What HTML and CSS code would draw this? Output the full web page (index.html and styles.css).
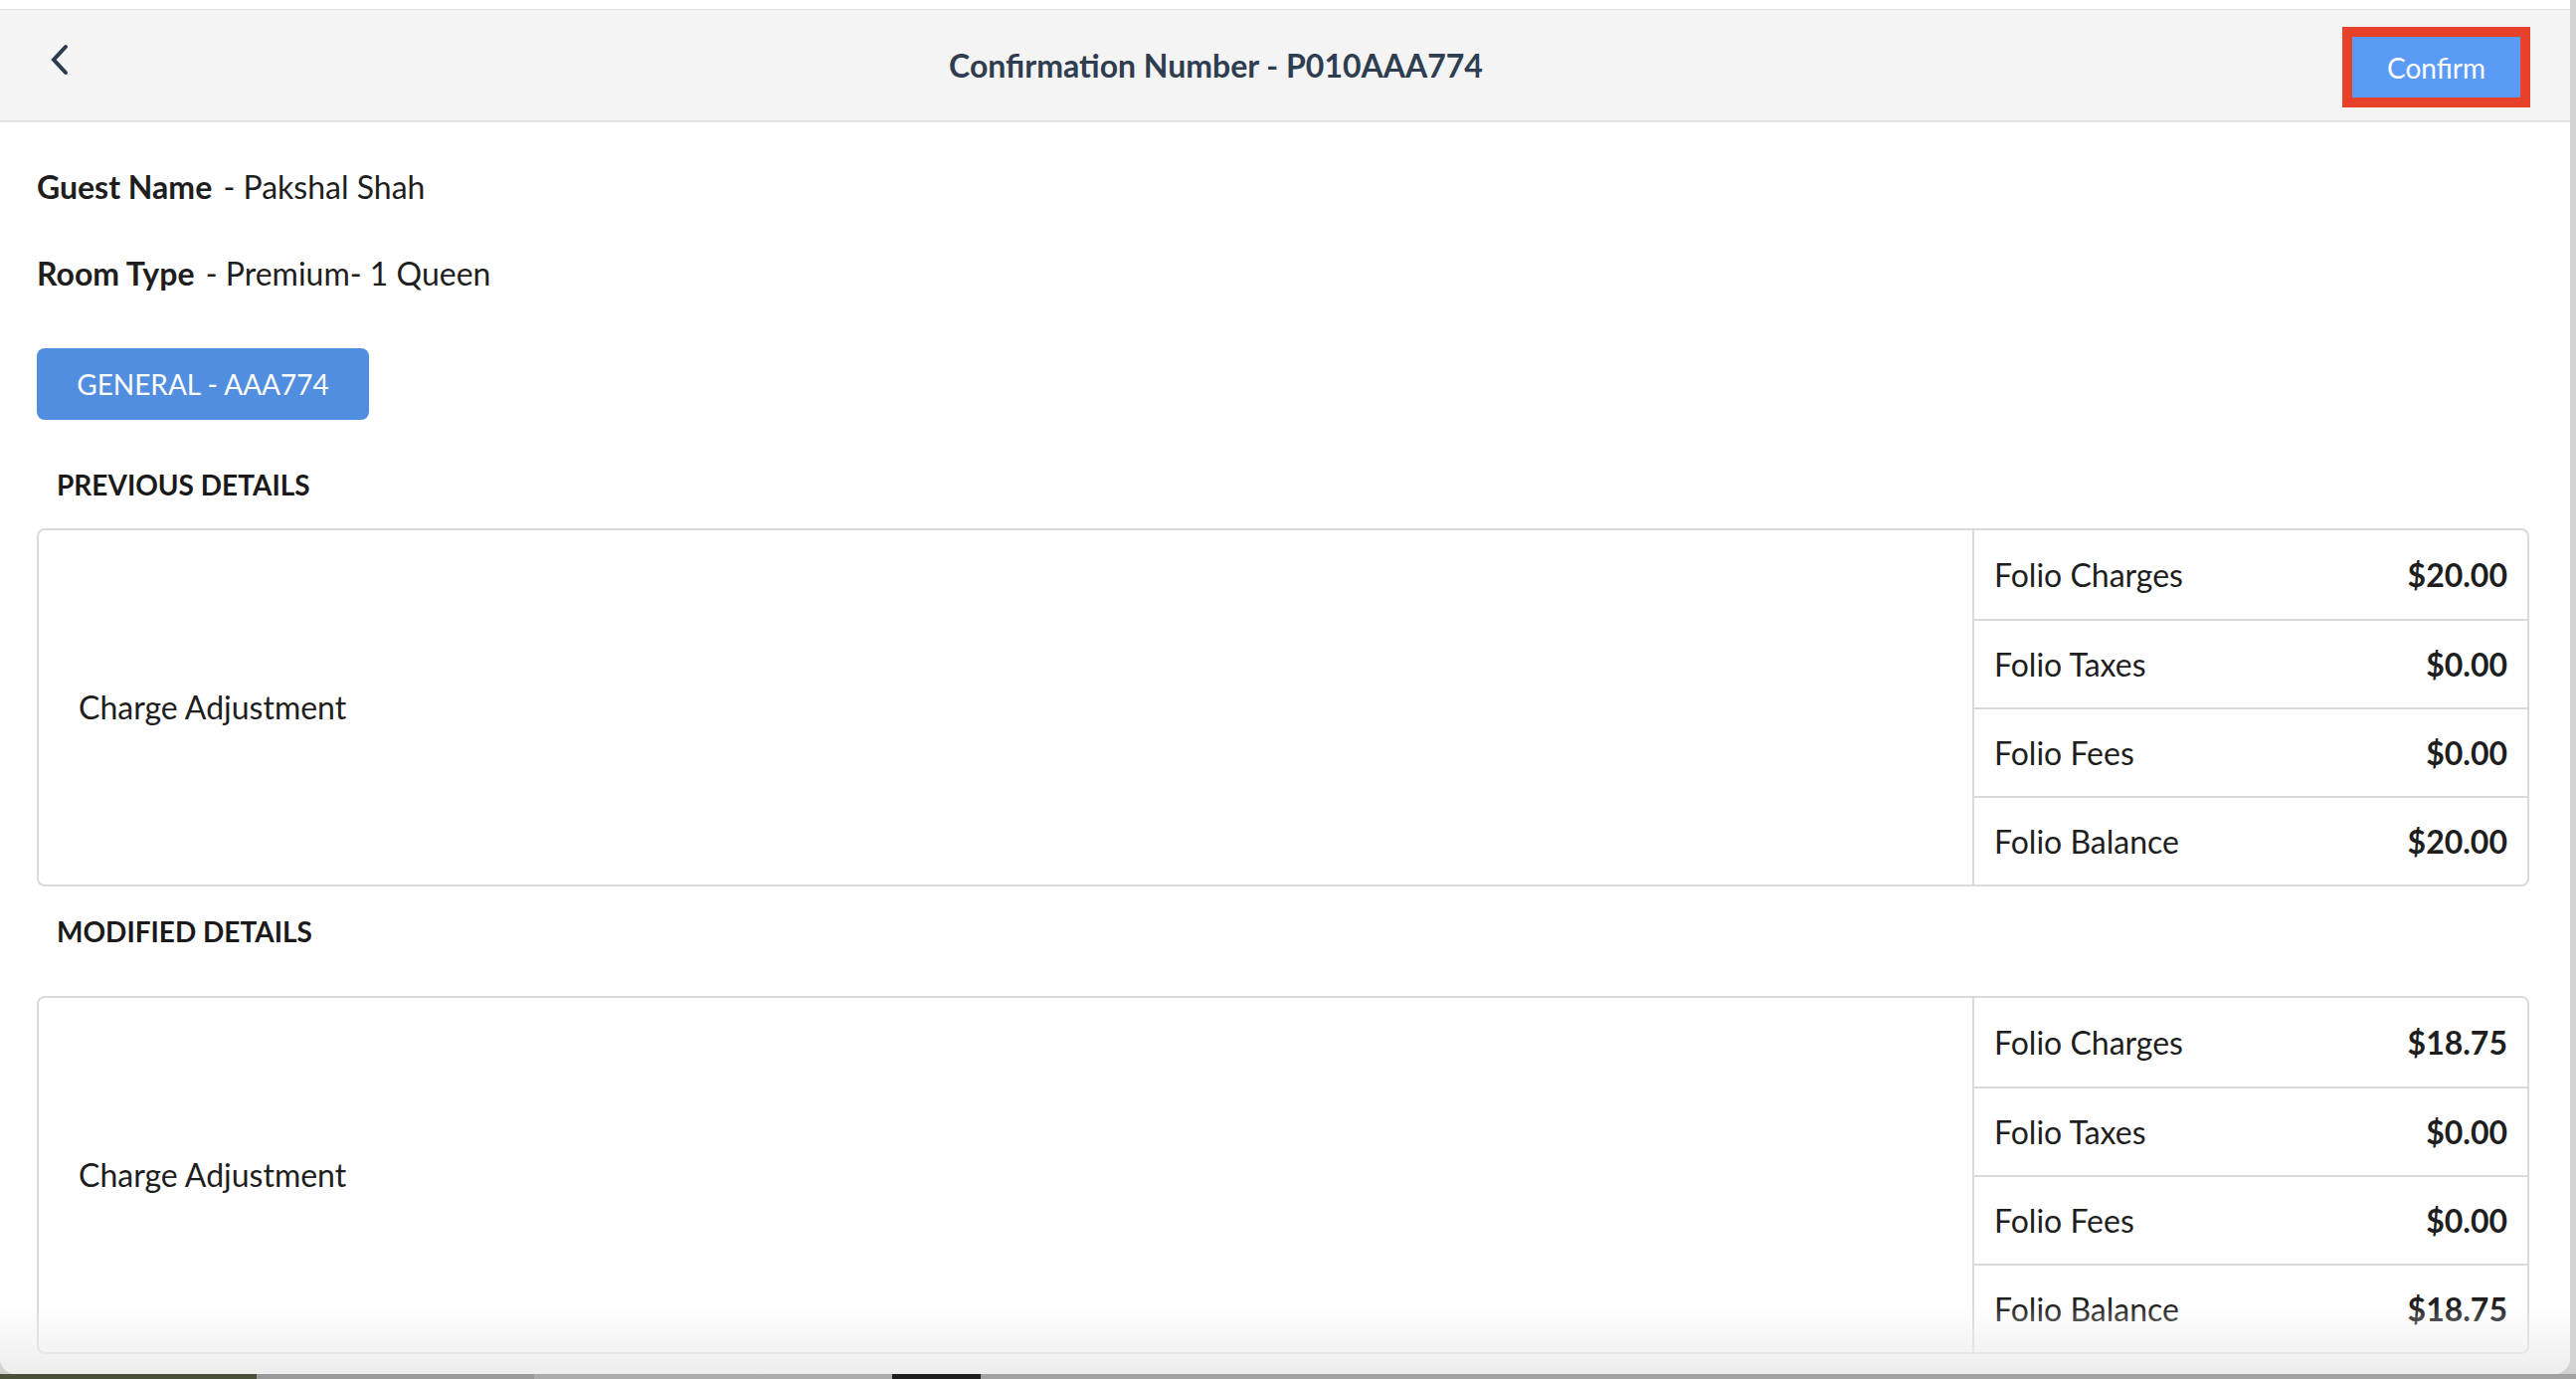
FILE: index.html
```html
<!DOCTYPE html>
<html lang="en">
<head>
<meta charset="utf-8">
<title>Confirmation Number - P010AAA774</title>
<link rel="stylesheet" href="styles.css">
</head>
<body>
<div class="window">
  <header class="topbar">
    <button class="back" aria-label="Back">
      <svg viewBox="0 0 20 32" width="20" height="32"><path d="M16 3 L4 16 L16 29" fill="none" stroke="#2b3a4f" stroke-width="4" stroke-linecap="round" stroke-linejoin="miter"/></svg>
    </button>
    <h1 class="title">Confirmation Number - P010AAA774</h1>
    <button class="confirm">Confirm</button>
  </header>
  <main class="content">
    <p class="info first"><b>Guest Name</b> - Pakshal Shah</p>
    <p class="info"><b>Room Type</b> - Premium- 1 Queen</p>
    <button class="folio-tab">GENERAL - AAA774</button>

    <h2 class="section">PREVIOUS DETAILS</h2>
    <div class="card">
      <div class="card-name">Charge Adjustment</div>
      <div class="totals">
        <div class="row"><span>Folio Charges</span><b>$20.00</b></div>
        <div class="row"><span>Folio Taxes</span><b>$0.00</b></div>
        <div class="row"><span>Folio Fees</span><b>$0.00</b></div>
        <div class="row"><span>Folio Balance</span><b>$20.00</b></div>
      </div>
    </div>

    <h2 class="section second">MODIFIED DETAILS</h2>
    <div class="card">
      <div class="card-name">Charge Adjustment</div>
      <div class="totals">
        <div class="row"><span>Folio Charges</span><b>$18.75</b></div>
        <div class="row"><span>Folio Taxes</span><b>$0.00</b></div>
        <div class="row"><span>Folio Fees</span><b>$0.00</b></div>
        <div class="row"><span>Folio Balance</span><b>$18.75</b></div>
      </div>
    </div>
  </main>
</div>
<div class="dock"></div>
</body>
</html>
```
FILE: styles.css
```css
* { box-sizing: border-box; }
html, body { margin: 0; padding: 0; }
body {
  width: 2590px;
  height: 1386px;
  overflow: hidden;
  background: #d2d2d2;
  font-family: Lato, "Noto Sans", sans-serif;
  color: #1e1e1e;
}
.window {
  position: relative;
  width: 2584px;
  height: 1381px;
  padding-top: 9px;
  background: #fff;
  border-radius: 0 0 16px 16px;
  overflow: hidden;
}
.window::after {
  content: "";
  position: absolute;
  left: 0;
  right: 0;
  bottom: 0;
  height: 70px;
  background: linear-gradient(rgba(238,238,238,0), #ededed);
  pointer-events: none;
}
.topbar {
  display: flex;
  align-items: center;
  height: 114px;
  padding: 0 40px 0 50px;
  background: #f4f4f4;
  border-top: 1px solid #e0e0e0;
  border-bottom: 2px solid #e2e2e2;
}
.back {
  align-self: flex-start;
  margin: 34px 20px 0 0;
  padding: 0;
  width: 20px;
  height: 32px;
  border: 0;
  background: none;
  display: block;
}
.back svg { display: block; }
.title {
  flex: 1;
  margin: 0;
  text-align: center;
  font-size: 32px;
  font-weight: 700;
  color: #2f3d50;
  line-height: 38px;
}
.confirm {
  margin-top: 4px;
  width: 189px;
  height: 81px;
  padding: 0;
  border: 10px solid #e8412a;
  background: #5b9bf8;
  color: #fff;
  font-family: Lato, "Noto Sans", sans-serif;
  font-size: 28px;
  font-weight: 400;
}
.content {
  padding: 0 41px 0 37px;
}
.info {
  margin: 49px 0 0;
  font-size: 32px;
  line-height: 38px;
  color: #1e1e1e;
}
.info.first { margin-top: 46px; }
.info b { font-weight: 700; margin-right: 3px; }
.folio-tab {
  display: block;
  margin-top: 56px;
  width: 334px;
  height: 72px;
  padding: 0;
  border: 0;
  border-radius: 8px;
  background: #528ee0;
  color: #fff;
  font-family: Lato, "Noto Sans", sans-serif;
  font-size: 28px;
  font-weight: 400;
}
.section {
  margin: 48px 0 27px;
  padding-left: 20px;
  font-size: 28px;
  line-height: 34px;
  font-weight: 700;
  color: #1a1a1a;
}
.section.second { margin: 28px 0 48px; }
.card {
  display: flex;
  height: 360px;
  border: 2px solid #dadada;
  border-radius: 8px;
  font-size: 32px;
  line-height: 38px;
}
.card-name {
  flex: 1;
  display: flex;
  align-items: center;
  padding-left: 40px;
}
.totals {
  width: 558px;
  display: grid;
  grid-template-rows: repeat(4, 1fr);
  border-left: 2px solid #dadada;
}
.row {
  display: flex;
  align-items: center;
  justify-content: space-between;
  padding: 0 20px;
}
.row + .row { border-top: 2px solid #dadada; }
.row b { font-weight: 700; }
.dock {
  width: 2590px;
  height: 5px;
  background: linear-gradient(to right, #4b5139 0 258px, #9a9a9a 258px 537px, #ababab 537px 897px, #1e1e1e 897px 986px, #a2a2a2 986px);
}
```
